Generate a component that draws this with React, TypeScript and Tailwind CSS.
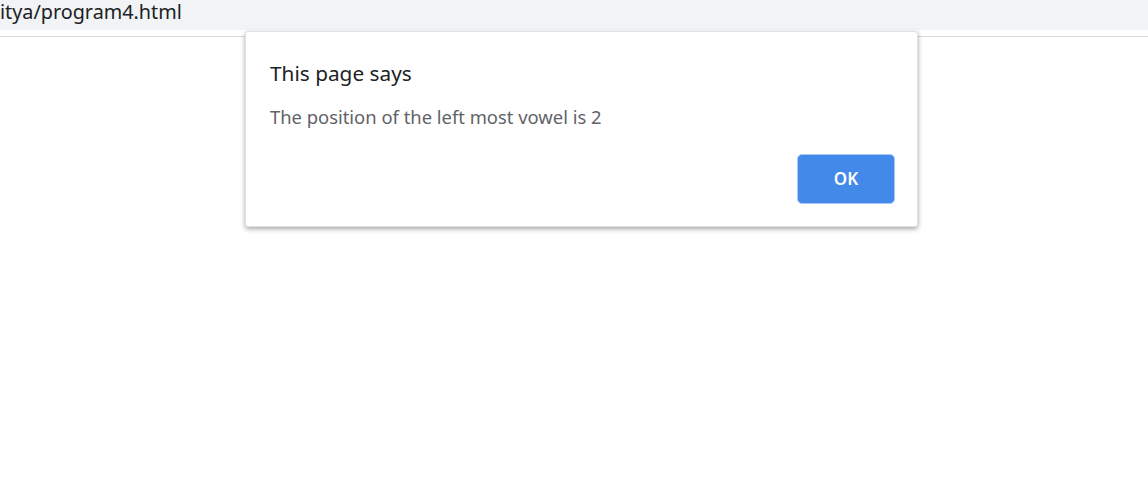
export default function App() {
  return (
    <main
      className="relative h-[491px] w-[1148px] overflow-hidden bg-white"
      style={{ fontFamily: '"Noto Sans", "Open Sans", sans-serif' }}
    >
      {/* Address bar strip */}
      <div className="flex h-[30px] items-center bg-[#f1f3f4]">
        <span className="-mt-[6px] text-[19.8px] leading-none text-[#202124]">itya/program4.html</span>
      </div>
      <div className="mt-[6px] h-px bg-[#dadce0]"></div>

      {/* Alert dialog */}
      <div className="absolute left-[245px] top-[31px] flex h-[196px] w-[673px] flex-col rounded-[3px] border border-[#e0e0e0] bg-white shadow-[0_2px_5px_rgba(0,0,0,0.35)]">
        <h2 className="ml-[24px] mt-[27px] text-[20.8px] leading-[28px] text-[#202124]">This page says</h2>
        <p className="ml-[24px] mt-[18px] text-[18.4px] leading-[24px] text-[#5f6368]">
          The position of the left most vowel is 2
        </p>
        <div className="mr-[22px] mt-auto mb-[22px] flex justify-end">
          <button className="h-[50px] w-[98px] rounded-[5px] border border-[#a8c7fa] bg-[#4289ea] text-[17px] font-semibold text-white">
            OK
          </button>
        </div>
      </div>
    </main>
  );
}
